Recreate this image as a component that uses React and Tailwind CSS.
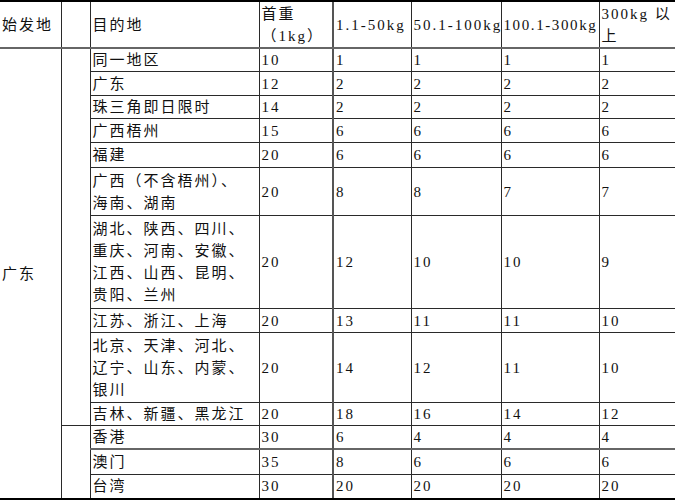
import React from 'react';

const rows = [
  { dest: ['同一地区'], first: '10', a: '1', b: '1', c: '1', d: '1', h: 'h-[23px]' },
  { dest: ['广东'], first: '12', a: '2', b: '2', c: '2', d: '2', h: 'h-[24px]' },
  { dest: ['珠三角即日限时'], first: '14', a: '2', b: '2', c: '2', d: '2', h: 'h-[23px]' },
  { dest: ['广西梧州'], first: '15', a: '6', b: '6', c: '6', d: '6', h: 'h-[24px]' },
  { dest: ['福建'], first: '20', a: '6', b: '6', c: '6', d: '6', h: 'h-[25px]' },
  { dest: ['广西（不含梧州）、', '海南、湖南'], first: '20', a: '8', b: '8', c: '7', d: '7', h: 'h-[48px]' },
  {
    dest: ['湖北、陕西、四川、', '重庆、河南、安徽、', '江西、山西、昆明、', '贵阳、兰州'],
    first: '20', a: '12', b: '10', c: '10', d: '9', h: 'h-[93px]',
  },
  { dest: ['江苏、浙江、上海'], first: '20', a: '13', b: '11', c: '11', d: '10', h: 'h-[24px]' },
  {
    dest: ['北京、天津、河北、', '辽宁、山东、内蒙、', '银川'],
    first: '20', a: '14', b: '12', c: '11', d: '10', h: 'h-[70px]',
  },
  { dest: ['吉林、新疆、黑龙江'], first: '20', a: '18', b: '16', c: '14', d: '12', h: 'h-[23px]' },
  { dest: ['香港'], first: '30', a: '6', b: '4', c: '4', d: '4', h: 'h-[23px]' },
  { dest: ['澳门'], first: '35', a: '8', b: '6', c: '6', d: '6', h: 'h-[25px]', thickTop: true },
  { dest: ['台湾'], first: '30', a: '20', b: '20', c: '20', d: '20', h: 'h-[25px]' },
];

const cell = 'border border-[#2a2a2a] px-[2px] py-0 align-middle text-left';
const head = `${cell} border-t-2 border-t-black border-b-2 border-b-[#666]`;

export default function App() {
  return (
    <div className="w-[675px] h-[500px] overflow-hidden bg-white text-[#111]">
      <table
        className="table-fixed border-collapse w-[675px] text-[15px] leading-[22px] tracking-[2px]"
        style={{ fontFamily: '"Liberation Serif", "Noto Sans CJK SC", serif' }}
      >
        <colgroup>
          <col className="w-[61px]" />
          <col className="w-[29px]" />
          <col className="w-[169px]" />
          <col className="w-[74px]" />
          <col className="w-[78px]" />
          <col className="w-[90px]" />
          <col className="w-[98px]" />
          <col className="w-[76px]" />
        </colgroup>
        <tbody>
          <tr className="h-[47px]">
            <td className={`${head} border-l-0 whitespace-nowrap`}>始发地</td>
            <td className={head}></td>
            <td className={head}>目的地</td>
            <td className={`${head} leading-[22px]`}>
              首重<br />（1kg）
            </td>
            <td className={`${head} border-l-2 border-l-[#555] whitespace-nowrap`}>1.1-50kg</td>
            <td className={`${head} whitespace-nowrap`}>50.1-100kg</td>
            <td className={`${head} whitespace-nowrap tracking-[1.6px]`}>100.1-300kg</td>
            <td className={`${head} leading-[22px] whitespace-nowrap`}>
              300kg 以<br />上
            </td>
          </tr>
          {rows.map((r, i) => {
            const top = r.thickTop ? 'border-t-2 border-t-[#666]' : '';
            const bottom = i === rows.length - 1 ? 'border-b-2 border-b-black' : '';
            return (
              <tr key={i} className={r.h}>
                {i === 0 && (
                  <td rowSpan={13} className={`${cell} border-l-0 border-b-2 border-b-black whitespace-nowrap`}>
                    广东
                  </td>
                )}
                {i === 0 && <td rowSpan={10} className={cell}></td>}
                {i === 10 && <td rowSpan={3} className={`${cell} border-b-2 border-b-black`}></td>}
                <td className={`${cell} ${top} ${bottom} whitespace-nowrap`}>
                  {r.dest.map((line, j) => (
                    <div key={j}>{line}</div>
                  ))}
                </td>
                <td className={`${cell} ${top} ${bottom}`}>{r.first}</td>
                <td className={`${cell} ${top} ${bottom} border-l-2 border-l-[#555]`}>{r.a}</td>
                <td className={`${cell} ${top} ${bottom}`}>{r.b}</td>
                <td className={`${cell} ${top} ${bottom}`}>{r.c}</td>
                <td className={`${cell} ${top} ${bottom}`}>{r.d}</td>
              </tr>
            );
          })}
        </tbody>
      </table>
    </div>
  );
}
